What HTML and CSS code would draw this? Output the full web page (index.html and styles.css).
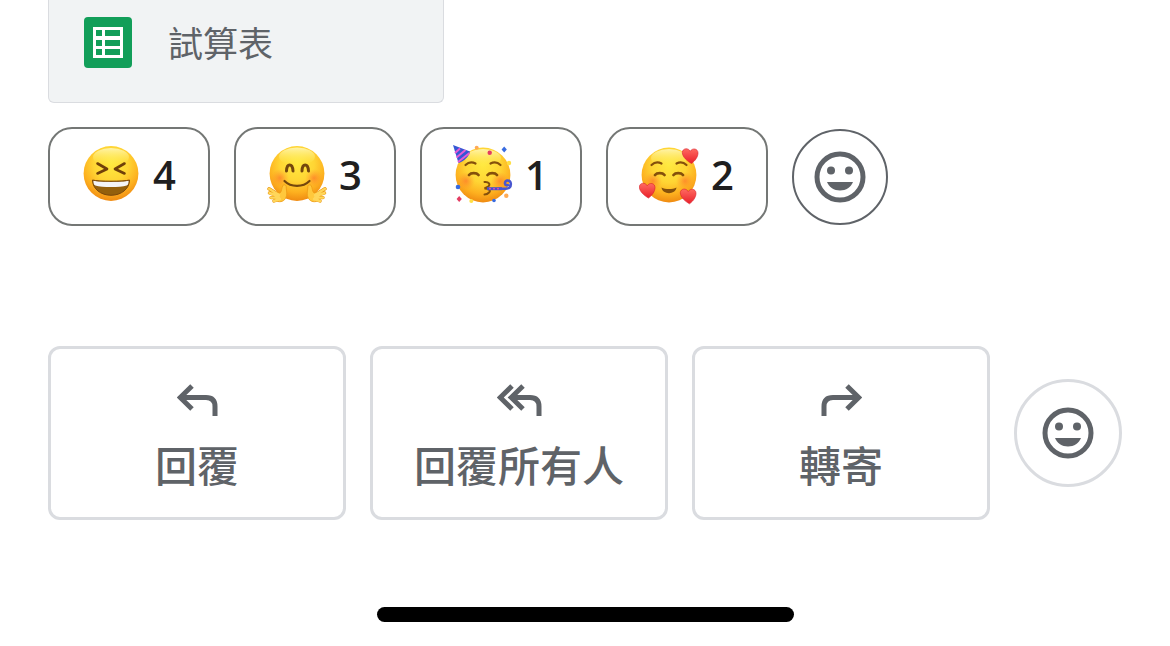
FILE: index.html
```html
<!DOCTYPE html>
<html lang="zh-Hant">
<head>
    <meta charset="UTF-8">
    <meta name="viewport" content="width=device-width, initial-scale=1.0">
    <title>郵件</title>
    <link rel="stylesheet" href="styles.css">
</head>
<body>
    <main class="message">
        <a class="attachment" href="#">
            <svg class="sheet-icon" viewBox="0 0 48 51" aria-hidden="true">
                <rect width="48" height="51" rx="4" fill="#129e59"/>
                <path fill="#fff" fill-rule="evenodd" d="M9 10h30v31H9zM12 13v6h6v-6zM21 13v6h15v-6zM12 23v6h6v-6zM21 23v6h15v-6zM12 32v6h6v-6zM21 32v6h15v-6z"/>
            </svg>
            <span>試算表</span>
        </a>

        <div class="reactions">
            <button type="button" class="reaction">
                <svg class="emoji" viewBox="0 0 60 60" aria-hidden="true">
                    <defs>
                        <radialGradient id="face" cx="50%" cy="32%" r="70%">
                            <stop offset="0" stop-color="#ffe93f"/>
                            <stop offset="0.45" stop-color="#ffd534"/>
                            <stop offset="0.75" stop-color="#fdb01f"/>
                            <stop offset="1" stop-color="#ee8610"/>
                        </radialGradient>
                        <linearGradient id="shine" x1="0" y1="0" x2="0" y2="1">
                            <stop offset="0" stop-color="#fffbc8" stop-opacity="0.8"/>
                            <stop offset="1" stop-color="#fff04f" stop-opacity="0"/>
                        </linearGradient>
                        <radialGradient id="cheek">
                            <stop offset="0" stop-color="#ff6a2a" stop-opacity="0.6"/>
                            <stop offset="1" stop-color="#ff8a2a" stop-opacity="0"/>
                        </radialGradient>
                        <linearGradient id="heart" x1="0" y1="0" x2="0" y2="1">
                            <stop offset="0" stop-color="#ff6a60"/>
                            <stop offset="1" stop-color="#e9202b"/>
                        </linearGradient>
                    </defs>
                    <circle cx="30" cy="28.500" r="27.400" fill="url(#face)"/>
                    <ellipse cx="30" cy="12" rx="18" ry="9" fill="url(#shine)"/>
                    <g fill="none" stroke="#70400a" stroke-width="2.600" stroke-linecap="round" stroke-linejoin="round">
                        <path d="M16.500 18.500L26 24l-9.500 4.500"/>
                        <path d="M43.500 18.500L34 24l9.500 4.500"/>
                    </g>
                    <path fill="#94600c" d="M11.500 35c6 1.600 31 1.600 37 0C48.500 44 40 50.300 30 50.300S11.500 44 11.500 35z"/>
                    <path fill="#f4f4f6" d="M12.300 35.800c7 1.500 28.500 1.500 35.400 0c.3 2.200-.4 4-2 4.700c-7 2-24.400 2-31.400 0c-1.600-.7-2.300-2.500-2-4.700z"/>
                    <path fill="none" stroke="#7a470a" stroke-width="1" d="M11.500 35c6 1.600 31 1.600 37 0C48.500 44 40 50.300 30 50.300S11.500 44 11.500 35z"/>
                </svg>
                <span>4</span>
            </button>
            <button type="button" class="reaction">
                <svg class="emoji" viewBox="0 0 60 60" aria-hidden="true">
                    <circle cx="30" cy="28.500" r="27.400" fill="url(#face)"/>
                    <ellipse cx="30" cy="11.500" rx="18" ry="9" fill="url(#shine)"/>
                    <circle cx="13" cy="33" r="9" fill="url(#cheek)"/>
                    <circle cx="47" cy="33" r="9" fill="url(#cheek)"/>
                    <g fill="none" stroke="#74470d" stroke-linecap="round">
                        <path stroke-width="3" d="M19.500 26c.3-8 6-8 6.500 0M35 26c.3-8 6-8 6.500 0"/>
                        <path stroke-width="2.200" d="M17.500 36c6.500 6.500 18.500 6.500 25 0"/>
                    </g>
                    <g id="hand">
                        <path fill="none" stroke="#e9940f" stroke-width="3.400" stroke-linecap="round" d="M12 50L2 43.800M11 51L2.500 48M12 52.500L4 52.600M13 54L7 56"/>
                        <path fill="#ffc83c" stroke="#ed9a14" stroke-width="0.800" d="M8 47.500l5 .5c2-2 1.500-5 2.800-7.300c1-1.700 3.600-.8 3.400 1.200c-.1 2.500 1 5.500.4 8.500C18.800 55 15 57.500 11 56.500c-3-1-4.500-5.500-3-9z"/>
                        <path fill="none" stroke="#ffd65a" stroke-width="2.400" stroke-linecap="round" d="M12 50L2 43.800M11 51L2.500 48M12 52.500L4 52.600M13 54L7 56"/>
                    </g>
                    <use href="#hand" transform="matrix(-1 0 0 1 60 0)"/>
                </svg>
                <span>3</span>
            </button>
            <button type="button" class="reaction">
                <svg class="emoji" viewBox="0 0 60 60" aria-hidden="true">
                    <circle cx="30" cy="30" r="27.400" fill="url(#face)"/>
                    <ellipse cx="30" cy="13" rx="18" ry="9" fill="url(#shine)"/>
                    <circle cx="13" cy="36" r="9" fill="url(#cheek)"/>
                    <circle cx="47" cy="36" r="9" fill="url(#cheek)"/>
                    <path fill="#3557d4" d="M0 0l17 6.500c-1 5-6 10-11.500 11.500z"/>
                    <path stroke="#e65bd5" stroke-width="2" d="M7 3.500L2 8M12.500 5L3.500 12.500M16.500 8L5 17"/>
                    <g fill="none" stroke="#85500b" stroke-linecap="round">
                        <path stroke-width="2.200" d="M12.500 20c3-3 7-3.200 10-1.500M37.500 18.500c3-1.700 7-1.500 10 1.500"/>
                        <path stroke-width="2.800" d="M16 30c2-2.500 7.500-2.500 9.500 0M34.500 30c2-2.500 7.500-2.500 9.500 0"/>
                        <path stroke-width="2" d="M31.500 37c4-.5 7 2.500 3 5l-3 1.500c4 0 7 2 4.500 4c-1 1.200-3 2-4.500 2"/>
                    </g>
                    <path fill="none" stroke="#4752c9" stroke-width="3" d="M34 43.700h15"/>
                    <path fill="none" stroke="#d447b4" stroke-width="1.500" d="M36 43.700h14" stroke-dasharray="2 2"/>
                    <path fill="none" stroke="#4856cf" stroke-width="2.600" d="M46 43.700h6c4 .3 6-1.500 5.800-5c-.5-4.500-6.300-4-5.800-.2c.2 2 3 2.400 3.700.7"/>
                    <g fill="#386be0">
                        <path d="M51.200 1.500l2.600 3l-2.600 3l-2.600-3z"/>
                        <circle cx="5" cy="42" r="2.300"/>
                        <circle cx="41" cy="55.500" r="1.800"/>
                    </g>
                    <g fill="#e33c62">
                        <circle cx="36.700" cy="7.700" r="2.200"/>
                        <path d="M6.200 51l2.600 3l-2.600 3l-2.600-3z"/>
                    </g>
                    <g fill="#ffab55">
                        <circle cx="23.700" cy="2.700" r="2"/>
                        <circle cx="53.300" cy="50.700" r="2.200"/>
                    </g>
                    <g fill="#ffdf44">
                        <circle cx="56" cy="18" r="2.200"/>
                        <circle cx="18.300" cy="56" r="2"/>
                    </g>
                </svg>
                <span>1</span>
            </button>
            <button type="button" class="reaction">
                <svg class="emoji" viewBox="0 0 60 60" aria-hidden="true">
                    <circle cx="30" cy="30" r="27.400" fill="url(#face)"/>
                    <ellipse cx="30" cy="13" rx="18" ry="9" fill="url(#shine)"/>
                    <circle cx="14" cy="36" r="9" fill="url(#cheek)"/>
                    <circle cx="46" cy="36" r="9" fill="url(#cheek)"/>
                    <g fill="none" stroke="#85500b" stroke-linecap="round">
                        <path stroke-width="2.200" d="M12.500 20c3-3 7-3.200 10-1.500M37.500 18.500c3-1.700 7-1.500 10 1.500"/>
                        <path stroke-width="2.800" d="M16 30c2-2.500 7.500-2.500 9.500 0M34.500 30c2-2.500 7.500-2.500 9.500 0"/>
                    </g>
                    <path fill="#85500b" d="M22.500 42.500c4 2 11 2 15 0c-1 7.500-14 7.500-15 0z"/>
                    <path id="love" fill="url(#heart)" stroke="#d8202c" stroke-width="0.600" d="M52.500 18.500C48 16 43.500 12 43.300 7.500C43.500 3 49.500 2.500 51.200 6.300C53.500 2.500 59 3.500 59 8C59 12 56 16 52.500 18.500z"/>
                    <use href="#love" transform="translate(-43 34.500)"/>
                    <use href="#love" transform="translate(-2 40.300)"/>
                </svg>
                <span>2</span>
            </button>
            <button type="button" class="add-reaction" aria-label="新增表情符號回應">
                <svg class="smiley" viewBox="0 0 52 52" aria-hidden="true">
                    <circle cx="26" cy="26" r="23" fill="none" stroke="currentColor" stroke-width="5"/>
                    <circle cx="17" cy="19.500" r="4" fill="currentColor"/>
                    <circle cx="35" cy="19.500" r="4" fill="currentColor"/>
                    <path fill="currentColor" d="M13 31h26c-2 5-7 8.500-13 8.500S15 36 13 31z"/>
                </svg>
            </button>
        </div>

        <div class="actions">
            <button type="button" class="action">
                <svg class="arrow" width="41" height="32" viewBox="0 0 41 32" aria-hidden="true">
                    <path d="M15 2L3.200 13.500L15 25M3 13.500h26q9 0 9 9V32"/>
                </svg>
                <span>回覆</span>
            </button>
            <button type="button" class="action">
                <svg class="arrow" width="45" height="32" viewBox="0 0 45 32" aria-hidden="true">
                    <path d="M15 2L3.200 13.500L15 25M26 2L14.200 13.500L26 25M14 13.500h19q9 0 9 9V32"/>
                </svg>
                <span>回覆所有人</span>
            </button>
            <button type="button" class="action">
                <svg class="arrow" width="41" height="32" viewBox="0 0 41 32" aria-hidden="true">
                    <path d="M26 2l11.800 11.500L26 25M38 13.500H12q-9 0-9 9V32"/>
                </svg>
                <span>轉寄</span>
            </button>
            <button type="button" class="add-reaction large" aria-label="以表情符號回應">
                <svg class="smiley" viewBox="0 0 52 52" aria-hidden="true">
                    <circle cx="26" cy="26" r="23" fill="none" stroke="currentColor" stroke-width="5"/>
                    <circle cx="17" cy="19.500" r="4" fill="currentColor"/>
                    <circle cx="35" cy="19.500" r="4" fill="currentColor"/>
                    <path fill="currentColor" d="M13 31h26c-2 5-7 8.500-13 8.500S15 36 13 31z"/>
                </svg>
            </button>
        </div>
    </main>
    <div class="home-bar"></div>
</body>
</html>
```
FILE: styles.css
```css
* {
    box-sizing: border-box;
}
body {
    font-family: "Open Sans", "Noto Sans CJK TC", sans-serif;
    background-color: #ffffff;
    color: #5f6368;
    margin: 0;
}
button {
    font-family: inherit;
    color: inherit;
    background-color: #ffffff;
    margin: 0;
    padding: 0;
    cursor: pointer;
}
svg {
    display: block;
    flex-shrink: 0;
}
.message {
    padding: 0 48px;
}
.attachment {
    display: flex;
    align-items: center;
    gap: 36px;
    width: 396px;
    max-width: 100%;
    padding: 16px 35px 34px;
    border: 1px solid #dadce0;
    border-top: none;
    border-radius: 0 0 6px 6px;
    background-color: #f1f3f4;
    color: #5f6368;
    font-family: "Noto Sans CJK TC", sans-serif;
    font-size: 35px;
    line-height: 52px;
    text-decoration: none;
}
.sheet-icon {
    width: 48px;
    height: 51px;
}
.reactions {
    display: flex;
    flex-wrap: wrap;
    align-items: center;
    gap: 24px;
    margin-top: 24px;
}
.reaction {
    display: flex;
    align-items: center;
    gap: 12px;
    min-width: 162px;
    padding: 16px 31px 19px;
    border: 2px solid #747775;
    border-radius: 24px;
    color: #1f1f1f;
    font-size: 40px;
    font-weight: 600;
    line-height: 60px;
}
.emoji {
    width: 60px;
    height: 60px;
}
.add-reaction {
    display: flex;
    justify-content: center;
    align-items: center;
    flex-shrink: 0;
    width: 96px;
    height: 96px;
    border: 2px solid #5f6368;
    border-radius: 50%;
}
.add-reaction.large {
    width: 108px;
    height: 108px;
    border: 3px solid #dadce0;
}
.smiley {
    width: 52px;
    height: 52px;
}
.actions {
    display: flex;
    align-items: center;
    gap: 24px;
    margin-top: 120px;
}
.action {
    display: flex;
    flex: 1;
    flex-direction: column;
    align-items: center;
    gap: 24px;
    padding: 35px 12px 29px;
    border: 3px solid #dadce0;
    border-radius: 12px;
    font-family: "Noto Sans CJK TC", sans-serif;
    font-size: 42px;
    font-weight: 500;
    line-height: 48px;
}
.arrow {
    fill: none;
    stroke: #5f6368;
    stroke-width: 5;
}
.home-bar {
    width: 417px;
    max-width: 60%;
    height: 15px;
    margin: 87px auto 24px;
    border-radius: 8px;
    background-color: #000000;
}
```
